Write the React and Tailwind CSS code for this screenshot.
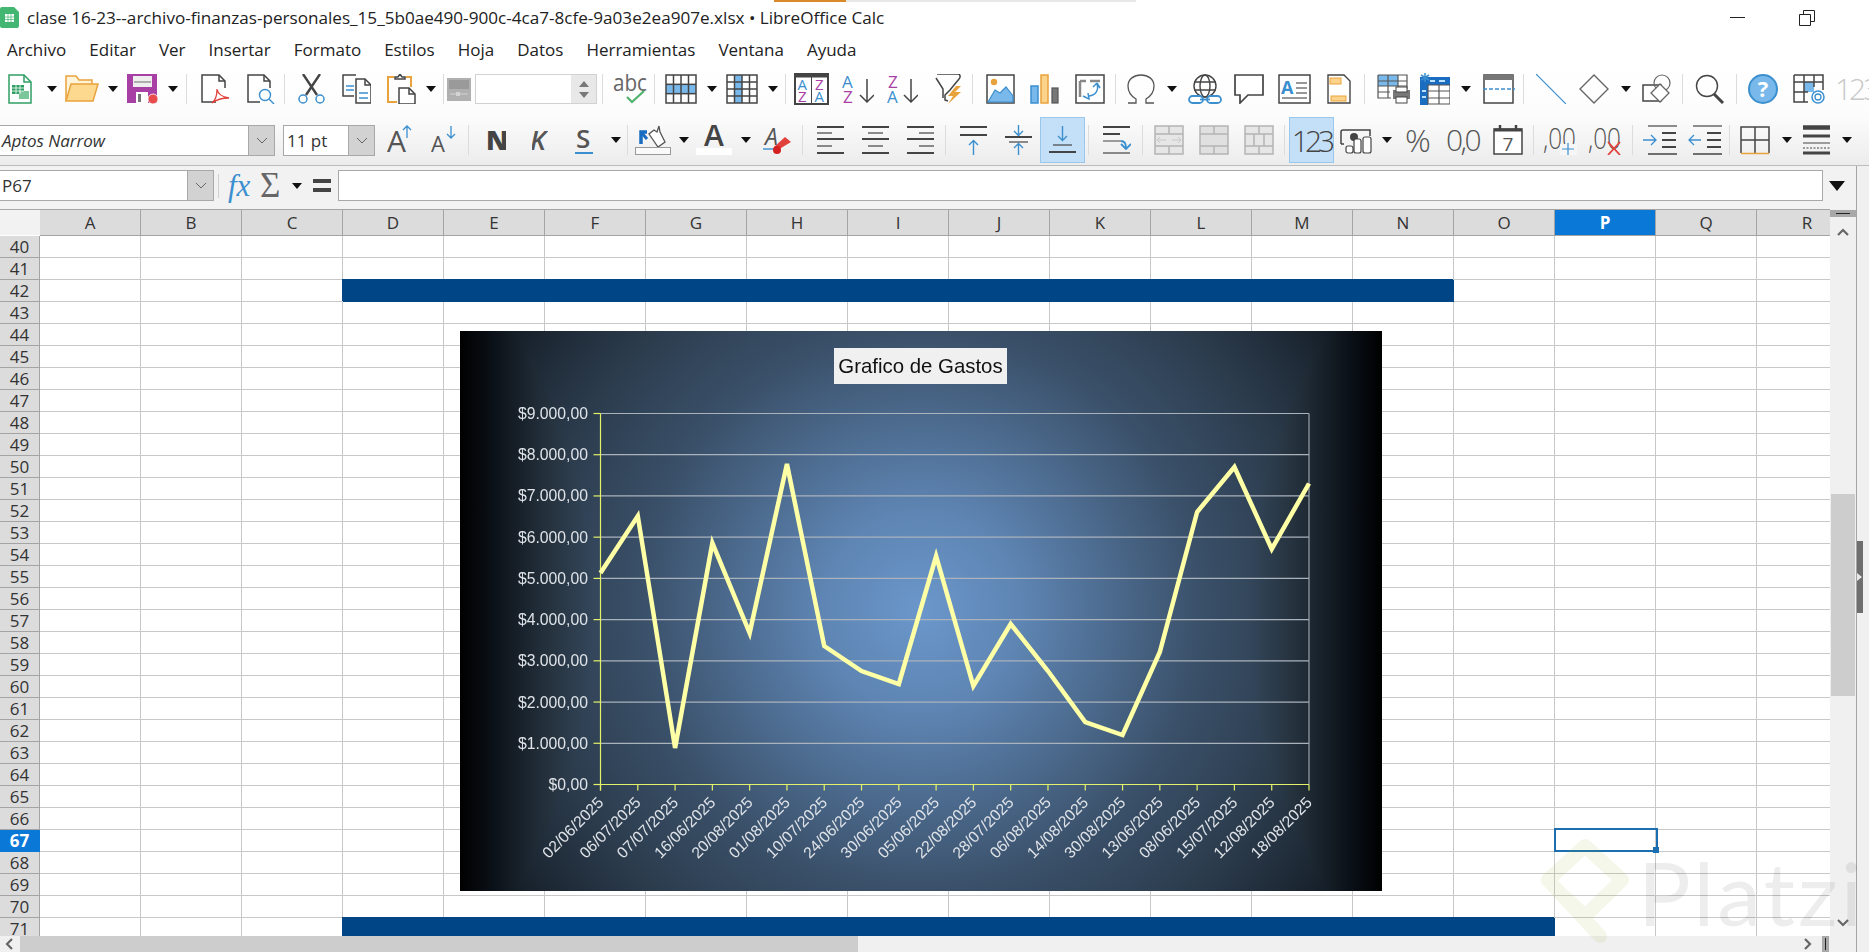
import React from 'react';

const BLUE = '#3b8fcf';
const LIGHT = '#79b8ea';
const DARK = '#444444';
const PURPLE = '#a83fa4';
const ORANGE = '#e9a33c';
const RED = '#e2403a';

const COLS = 'ABCDEFGHIJKLMNOPQR'.split('');
const ROWS = Array.from({ length: 32 }, (_, i) => 40 + i);
const MENU = ['Archivo', 'Editar', 'Ver', 'Insertar', 'Formato', 'Estilos', 'Hoja', 'Datos', 'Herramientas', 'Ventana', 'Ayuda'];

// chart data, in pixels inside the chart box
const LABELS = ['02/06/2025', '06/07/2025', '07/07/2025', '16/06/2025', '20/08/2025', '01/08/2025', '10/07/2025', '24/06/2025', '30/06/2025', '05/06/2025', '22/08/2025', '28/07/2025', '06/08/2025', '14/08/2025', '30/08/2025', '13/06/2025', '08/06/2025', '15/07/2025', '12/08/2025', '18/08/2025'];
const POINTS = [242, 185, 417, 212, 302, 133, 315, 340, 353, 225, 355, 293, 340, 391, 404, 321, 181, 136, 218, 152.5];
const Y_LABELS = ['$9.000,00', '$8.000,00', '$7.000,00', '$6.000,00', '$5.000,00', '$4.000,00', '$3.000,00', '$2.000,00', '$1.000,00', '$0,00'];
const PLOT = { left: 140.5, right: 849, top: 82.5, bottom: 453.5 };
const STEP_X = (PLOT.right - PLOT.left) / 19;
const STEP_Y = (PLOT.bottom - PLOT.top) / 9;

const Ico = ({ w, h = 30, className = '', children }) => (
    <svg width={w} height={h} viewBox={`0 0 ${w} ${h}`} fill="none" className={`shrink-0 ${className}`}>
        {children}
    </svg>
);

const Arrow = ({ className }) => (
    <Ico w={10} h={6} className={className}>
        <path d="M0 0h10L5 6z" fill="#111" />
    </Ico>
);

const Sep = ({ className }) => <div className={`w-px h-[30px] bg-[#dcdcdc] shrink-0 ${className}`} />;

const Chevron = () => (
    <svg width="12" height="7" viewBox="0 0 12 7" fill="none">
        <path d="M1 1l5 5 5-5" stroke="#666" strokeWidth="1" />
    </svg>
);

const Grid = ({ x, y, w, h, cols, rows, stroke = DARK, sw = 1.5 }) => (
    <g stroke={stroke} strokeWidth={sw}>
        <rect x={x} y={y} width={w} height={h} />
        {Array.from({ length: cols - 1 }, (_, i) => {
            const px = x + (w / cols) * (i + 1);
            return <path key={i} d={`M${px} ${y}V${y + h}`} />;
        })}
        {Array.from({ length: rows - 1 }, (_, i) => {
            const py = y + (h / rows) * (i + 1);
            return <path key={i} d={`M${x} ${py}H${x + w}`} />;
        })}
    </g>
);

const Lines = ({ rows, stroke = DARK }) => (
    <g stroke={stroke}>
        {rows.map(([x1, x2, y, sw = 2], i) => (
            <path key={i} d={`M${x1} ${y}H${x2}`} strokeWidth={sw} />
        ))}
    </g>
);

const TopToolbar = () => (
    <div className="flex items-center h-[42px] overflow-hidden">
        <Ico w={24} className="ml-2">
            <path d="M1 1h15l7 7v21H1z" stroke="#2f9e63" strokeWidth="1.5" fill="#fff" />
            <path d="M16 1v7h7" stroke="#2f9e63" strokeWidth="1.5" />
            <rect x="4" y="11" width="12" height="9" fill="#2f9e63" />
            <rect x="11" y="17" width="10" height="8" fill="#7cc79a" />
            <path d="M4 14h12M4 17h12M8 11v9M12 11v9" stroke="#fff" strokeWidth=".8" />
        </Ico>
        <Arrow className="ml-[15px]" />
        <Ico w={34} className="ml-2">
            <path d="M1 27V2h10l3 4h13v5" stroke={ORANGE} strokeWidth="1.5" fill="#fff3d8" />
            <path d="M1 27l5-17h27l-5 17z" stroke={ORANGE} strokeWidth="1.5" fill="#fdd88f" />
        </Ico>
        <Arrow className="ml-[9px]" />
        <Ico w={32} className="ml-[9px]">
            <path d="M1 1h28v27H1z" fill={PURPLE} stroke={PURPLE} strokeWidth="2" />
            <rect x="6" y="2" width="19" height="11" fill="#eee" />
            <path d="M7 8h17" stroke="#999" strokeWidth="1.5" />
            <rect x="9" y="18" width="12" height="11" fill="#fff" />
            <rect x="11" y="20" width="3" height="8" fill="#777" />
            <circle cx="26" cy="25" r="5" fill="#e84b4b" stroke="#fff" strokeWidth=".8" />
        </Ico>
        <Arrow className="ml-[9px]" />
        <Sep className="ml-2" />
        <Ico w={29} className="ml-[14px]">
            <path d="M24 14V7l-6-6H1v27h14" stroke={DARK} strokeWidth="1.5" fill="#fff" />
            <path d="M18 1v6h6" stroke={DARK} strokeWidth="1.5" />
            <path d="M11 29c4-3 5-8 5-14 1 6 5 8 12 9-6 0-12 1-17 5z" stroke={RED} strokeWidth="1.3" />
        </Ico>
        <Ico w={28} className="ml-[17px]">
            <path d="M23 14V7l-6-6H1v27h12" stroke={DARK} strokeWidth="1.5" fill="#fff" />
            <path d="M17 1v6h6" stroke={DARK} strokeWidth="1.5" />
            <circle cx="18" cy="21" r="5.5" stroke={BLUE} strokeWidth="1.4" fill="#fff" />
            <path d="M22 25l5 5" stroke={BLUE} strokeWidth="1.4" />
        </Ico>
        <Sep className="ml-[9px]" />
        <Ico w={27} className="ml-[13px]">
            <path d="M5 0l14 21M22 0L8 21" stroke={DARK} strokeWidth="2.4" />
            <circle cx="5" cy="25" r="4" stroke={BLUE} strokeWidth="1.5" fill="#fff" />
            <circle cx="22" cy="25" r="4" stroke={BLUE} strokeWidth="1.5" fill="#fff" />
        </Ico>
        <Ico w={29} className="ml-[17px]">
            <path d="M14 1H1v21h11" stroke={DARK} strokeWidth="1.5" />
            <path d="M4 12h8M4 16h8" stroke={BLUE} strokeWidth="1.5" />
            <path d="M14 5h9l6 6v18H14z" stroke={DARK} strokeWidth="1.5" fill="#fff" />
            <path d="M23 5v6h6" stroke={DARK} strokeWidth="1.5" />
            <path d="M17 19h9M17 24h9" stroke={BLUE} strokeWidth="1.7" />
        </Ico>
        <Ico w={29} className="ml-4">
            <path d="M7 3H1v25h9M19 3h5v10" stroke={ORANGE} strokeWidth="2" />
            <path d="M8 5V3h3l2-3 2 3h3v2z" stroke={DARK} strokeWidth="1.5" fill="#fff" />
            <path d="M12 14h10l6 6v10H12z" stroke={DARK} strokeWidth="1.5" fill="#fff" />
            <path d="M22 14v6h6" stroke={DARK} strokeWidth="1.5" />
        </Ico>
        <Arrow className="ml-[10px]" />
        <Sep className="ml-[7px]" />
        <Ico w={24} h={23} className="ml-[3px]">
            <rect width="24" height="23" fill="#b0b0b0" />
            <rect x="2" y="2" width="20" height="9" fill="#9a9a9a" />
            <path d="M3 16h18" stroke="#d4d4d4" strokeWidth="1" />
            <rect x="9" y="14" width="4" height="4" fill="#d4d4d4" />
        </Ico>
        <div className="flex ml-1 w-[122px] h-[30px] bg-white border border-[#d2d2d2] shrink-0">
            <div className="flex-1" />
            <div className="w-[25px] flex flex-col items-center justify-around bg-[#e8e8e8] py-[3px]">
                <svg width="10" height="6" viewBox="0 0 12 7"><path d="M0 7L6 0l6 7z" fill="#777" /></svg>
                <svg width="10" height="6" viewBox="0 0 12 7"><path d="M0 0l6 7 6-7z" fill="#777" /></svg>
            </div>
        </div>
        <Sep className="ml-[5px]" />
        <Ico w={34} className="ml-[10px]">
            <text x="0" y="17" fontSize="23" fill="#666" textLength="34" lengthAdjust="spacingAndGlyphs">abc</text>
            <path d="M14 23l5 5 12-11" stroke="#4fb36f" strokeWidth="2.2" />
        </Ico>
        <Sep className="ml-[7px]" />
        <Ico w={32} className="ml-[10px]">
            <rect x="1" y="10" width="30" height="9" fill={LIGHT} />
            <Grid x={1} y={1} w={30} h={28} cols={4} rows={3} />
        </Ico>
        <Arrow className="ml-[10px]" />
        <Ico w={32} className="ml-[9px]">
            <rect x="8.500" y="1" width="7.500" height="28" fill={LIGHT} />
            <Grid x={1} y={1} w={30} h={28} cols={4} rows={4} />
        </Ico>
        <Arrow className="ml-[10px]" />
        <Sep className="ml-[7px]" />
        <Ico w={35} h={32} className="ml-2">
            <rect x="1" y="1" width="33" height="30" stroke={DARK} strokeWidth="2" fill="#fff" />
            <path d="M1 3h33" stroke={DARK} strokeWidth="3" />
            <path d="M17.500 4v26" stroke={DARK} strokeWidth="1" />
            <text x="3.500" y="17" fontSize="15" fill={BLUE}>A</text>
            <text x="4" y="29" fontSize="15" fill={PURPLE}>Z</text>
            <text x="21" y="17" fontSize="15" fill={PURPLE}>Z</text>
            <text x="20.500" y="29" fontSize="15" fill={BLUE}>A</text>
        </Ico>
        <Ico w={32} className="ml-[13px]">
            <text x="0" y="14" fontSize="17" fill={BLUE}>A</text>
            <text x="1" y="29" fontSize="17" fill={PURPLE}>Z</text>
            <path d="M25 5v23M18 21l7 7 7-7" stroke={DARK} strokeWidth="1.5" />
        </Ico>
        <Ico w={31} className="ml-[13px]">
            <text x="1" y="14" fontSize="17" fill={PURPLE}>Z</text>
            <text x="0" y="29" fontSize="17" fill={BLUE}>A</text>
            <path d="M24 5v23M17 21l7 7 7-7" stroke={DARK} strokeWidth="1.5" />
        </Ico>
        <Ico w={30} className="ml-4">
            <path d="M3 0h21c2 0 3 3 1 5L16 16l-5 5v5l3 1M2 4l7 11v9" stroke={DARK} strokeWidth="1.5" />
            <path d="M22 12l-8 10h5l-5 8 13-12h-6l6-6z" fill={ORANGE} />
        </Ico>
        <Sep className="ml-2" />
        <Ico w={29} className="ml-[13px]">
            <rect x="1" y="1" width="27" height="28" stroke={DARK} strokeWidth="1.5" fill="#fff" />
            <circle cx="8" cy="8" r="3.200" fill={ORANGE} />
            <path d="M2 28l7-12 5 3 6-6 7 9v6z" fill={LIGHT} stroke={BLUE} strokeWidth="1.2" />
        </Ico>
        <Ico w={29} className="ml-[15px]">
            <rect x="1" y="12" width="7" height="17" fill={LIGHT} stroke={BLUE} strokeWidth="1.5" />
            <rect x="11" y="1" width="7" height="28" fill="#fbd38a" stroke={ORANGE} strokeWidth="1.5" />
            <rect x="22" y="14" width="6" height="15" fill="#777" stroke="#555" strokeWidth="1.2" />
        </Ico>
        <Ico w={30} className="ml-4">
            <rect x="1" y="1" width="28" height="28" stroke={DARK} strokeWidth="1.5" fill="#fff" />
            <path d="M5 7h6M15 7h10M5 7v16" stroke="#888" strokeWidth="2.500" />
            <path d="M22 10c2 6-1 11-8 12M8 22l6 3-1-6M22 9l-4 4M22 9l3 5" stroke={BLUE} strokeWidth="1.5" />
        </Ico>
        <Sep className="ml-[10px]" />
        <Ico w={30} className="ml-[10px]">
            <path d="M2 29h8v-4C5 22 2 18 2 12 2 5 8 1 15 1s13 4 13 11c0 6-3 10-8 13v4h8" stroke="#555" strokeWidth="1.3" />
        </Ico>
        <Arrow className="ml-[11px]" />
        <Ico w={34} className="ml-[11px]">
            <circle cx="17" cy="12" r="11" stroke={DARK} strokeWidth="1.4" />
            <ellipse cx="17" cy="12" rx="5" ry="11" stroke={DARK} strokeWidth="1.4" />
            <path d="M6 8h22M6 16h22" stroke={DARK} strokeWidth="1.4" />
            <rect x="1" y="22" width="14" height="7" rx="3.500" stroke={BLUE} strokeWidth="1.8" fill="#fff" />
            <rect x="19" y="22" width="14" height="7" rx="3.500" stroke={BLUE} strokeWidth="1.8" fill="#fff" />
            <path d="M12 25.500h10" stroke={BLUE} strokeWidth="1.8" />
        </Ico>
        <Ico w={30} className="ml-3">
            <path d="M1 1h28v20H14l-8 8v-8H1z" stroke={DARK} strokeWidth="1.7" fill="#fff" />
        </Ico>
        <Ico w={33} className="ml-[14px]">
            <rect x="1" y="1" width="31" height="28" stroke={DARK} strokeWidth="1.5" fill="#fff" />
            <text x="3" y="20" fontSize="18" fontWeight="700" fill={BLUE}>A</text>
            <path d="M18 9h11M18 14h11M18 19h11M4 24h25" stroke="#777" strokeWidth="1.5" />
        </Ico>
        <Ico w={24} className="ml-4">
            <path d="M1 1h16l6 6v22H1z" stroke={DARK} strokeWidth="1.4" fill="#fff" />
            <rect x="3" y="4" width="11" height="6" fill="#fbd38a" stroke={ORANGE} strokeWidth="1" />
            <rect x="4" y="22" width="15" height="5" fill="#fbd38a" stroke={ORANGE} strokeWidth="1" />
        </Ico>
        <Sep className="ml-[13px]" />
        <Ico w={34} className="ml-3">
            <rect x="1" y="1" width="20" height="11" fill={LIGHT} />
            <path d="M1 1h29v14M1 1v23h13M1 7h29M1 12h29M1 18h12M11 1v23M21 1v12" stroke="#555" strokeWidth="1.2" />
            <rect x="16" y="16" width="17" height="9" fill="#777" />
            <rect x="19" y="13" width="11" height="5" fill="#fff" stroke={DARK} />
            <rect x="19" y="23" width="11" height="6" fill="#fff" stroke={DARK} />
        </Ico>
        <Ico w={30} h={32} className="ml-[9px]">
            <rect x="0" y="4" width="30" height="28" fill="#fff" />
            <rect x="0" y="4" width="8" height="28" fill="#1a6dc0" />
            <rect x="0" y="4" width="30" height="8" fill="#1a6dc0" />
            <path d="M8 12h22v19H8zM8 18h22M8 25h22M19 12v19" stroke="#555" strokeWidth="1.2" />
            <path d="M2 18h4M2 24h4M10 8h5M19 8h6" stroke="#bfe0fa" strokeWidth="2" />
            <path d="M5 0v9M1 2l8 5M9 2L1 7" stroke={BLUE} strokeWidth="1.5" />
        </Ico>
        <Arrow className="ml-[11px]" />
        <Ico w={32} className="ml-3">
            <rect x="1" y="1" width="29" height="28" stroke={DARK} strokeWidth="1.5" fill="#fff" />
            <rect x="1" y="1" width="29" height="5" fill="#777" />
            <path d="M0 15h32" stroke={BLUE} strokeWidth="1.7" strokeDasharray="4 2" />
        </Ico>
        <Sep className="ml-2" />
        <Ico w={30} className="ml-3">
            <path d="M0 0l30 30" stroke={BLUE} strokeWidth="1.2" />
        </Ico>
        <Ico w={30} className="ml-[13px]">
            <path d="M15 1l14 14-14 14L1 15z" stroke="#666" strokeWidth="1.4" />
        </Ico>
        <Arrow className="ml-3" />
        <Ico w={30} className="ml-[11px]">
            <rect x="1" y="11" width="18" height="16" stroke={DARK} strokeWidth="1.5" />
            <circle cx="20" cy="9" r="8" stroke="#666" strokeWidth="1.2" />
            <path d="M18 10l9 9-9 9-9-9z" stroke="#666" strokeWidth="1.3" fill="#fff" />
        </Ico>
        <Sep className="ml-[10px]" />
        <Ico w={30} className="ml-3">
            <circle cx="12" cy="12" r="10.500" stroke="#444" strokeWidth="1.4" />
            <path d="M19 20l9 9" stroke="#444" strokeWidth="3" />
        </Ico>
        <Sep className="ml-[11px]" />
        <Ico w={30} className="ml-[11px]">
            <circle cx="15" cy="15" r="14" fill={LIGHT} stroke={BLUE} strokeWidth="2" />
            <text x="15" y="23" fontSize="22" fontWeight="700" fill="#fff" textAnchor="middle">?</text>
        </Ico>
        <Ico w={32} className="ml-[15px]">
            <rect x="11" y="8" width="10" height="10" fill={LIGHT} />
            <path d="M1 1h29v15M1 1v27h14M1 8h29M1 18h14M11 1v27M21 1v12" stroke="#444" strokeWidth="1.5" />
            <circle cx="25" cy="23" r="6" stroke={BLUE} strokeWidth="1.5" fill="#fff" />
            <circle cx="25" cy="23" r="3" stroke={BLUE} strokeWidth="1.3" />
        </Ico>
        <span className="ml-[10px] text-[30px] leading-none font-light tracking-[-3px] text-[#c8c8c8] shrink-0">123</span>
    </div>
);

const FormatToolbar = () => (
    <div className="flex items-center h-[55px] pt-[5px] overflow-hidden">
        <div className="flex w-[275px] h-[31px] bg-white border border-l-0 border-[#a8a8a8] shrink-0">
            <span className="flex-1 pl-[2px] text-[17px] leading-[29px] italic text-[#333]">Aptos Narrow</span>
            <div className="w-[26px] flex items-center justify-center bg-[#d2d2d2] border-l border-[#a8a8a8]"><Chevron /></div>
        </div>
        <div className="flex ml-2 w-[92px] h-[31px] bg-white border border-[#a8a8a8] shrink-0">
            <span className="flex-1 pl-[3px] text-[17px] leading-[29px] text-[#333]">11 pt</span>
            <div className="w-[26px] flex items-center justify-center bg-[#d2d2d2] border-l border-[#a8a8a8]"><Chevron /></div>
        </div>
        <Ico w={25} className="ml-3">
            <text x="0" y="27" fontSize="30" fill="#555">A</text>
            <path d="M20 13V1M16 5l4-4 4 4" stroke={BLUE} strokeWidth="1.3" />
        </Ico>
        <Ico w={25} className="ml-[19px]">
            <text x="0" y="27" fontSize="22" fill="#555">A</text>
            <path d="M20 1v12M16 9l4 4 4-4" stroke={BLUE} strokeWidth="1.3" />
        </Ico>
        <Sep className="ml-3" />
        <Ico w={19} className="ml-[18px]">
            <text x="-1" y="25" fontSize="27" fontWeight="800" fill="#444">N</text>
        </Ico>
        <Ico w={16} className="ml-[26px]">
            <text x="-2" y="25" fontSize="27" fontStyle="italic" fontWeight="600" fill="#555">K</text>
        </Ico>
        <Ico w={18} className="ml-[27px]">
            <text x="1" y="23" fontSize="26" fontWeight="600" fill="#555">S</text>
            <path d="M0 28h18" stroke={BLUE} strokeWidth="2" />
        </Ico>
        <Arrow className="ml-[18px]" />
        <Sep className="ml-[6px]" />
        <Ico w={36} className="ml-[7px]">
            <path d="M6 19V7h6" stroke="#1a6dc0" strokeWidth="3.500" />
            <path d="M6 7l6 7" stroke="#1a6dc0" strokeWidth="3" />
            <path d="M14 9l9 13 7-5-5-10-1-6-2 6-3-2z" stroke="#555" strokeWidth="1.3" fill="#fff" />
            <rect x=".5" y="22.500" width="35" height="7" stroke="#999" fill="#fafafa" />
        </Ico>
        <Arrow className="ml-2" />
        <Ico w={36} className="ml-[7px]">
            <rect y="23" width="36" height="7" fill="#fff" />
            <text x="18" y="21" fontSize="30" fontWeight="600" textAnchor="middle" fill="#444">A</text>
        </Ico>
        <Arrow className="ml-[9px]" />
        <Ico w={28} className="ml-3">
            <text x="2" y="20" fontSize="23" fontStyle="italic" fill="#555">A</text>
            <path d="M0 24h12" stroke={BLUE} strokeWidth="1.4" />
            <path d="M13 26l-2-4 11-10 6 5z" fill={RED} />
            <circle cx="14" cy="25" r="4" fill="#d42020" />
        </Ico>
        <Sep className="ml-[11px]" />
        <Ico w={27} className="ml-[14px]">
            <Lines rows={[[0, 27, 2], [0, 15, 8, 1.2], [0, 27, 14], [0, 15, 21, 1.2], [0, 27, 28]]} />
        </Ico>
        <Ico w={27} className="ml-[18px]">
            <Lines rows={[[0, 27, 2], [6, 21, 8, 1.2], [0, 27, 14], [6, 21, 21, 1.2], [0, 27, 28]]} />
        </Ico>
        <Ico w={27} className="ml-[18px]">
            <Lines rows={[[0, 27, 2], [12, 27, 8, 1.2], [0, 27, 14], [12, 27, 21, 1.2], [0, 27, 28]]} />
        </Ico>
        <Sep className="ml-[11px]" />
        <Ico w={27} className="ml-[14px]">
            <Lines rows={[[0, 27, 2], [0, 27, 10]]} />
            <path d="M13.500 30V16M9 20l4.500-4.500L18 20" stroke={BLUE} strokeWidth="1.4" />
        </Ico>
        <Ico w={27} className="ml-[18px]">
            <path d="M13.500 0v10M9 6l4.500 4.500L18 6M13.500 30V19M9 23l4.500-4.500L18 23" stroke={BLUE} strokeWidth="1.4" />
            <Lines rows={[[0, 27, 12], [4, 23, 17, 1.2]]} />
        </Ico>
        <div className="ml-2 flex items-center justify-center w-[45px] h-[46px] bg-[#c4e0f8] border border-[#9ac8ec] shrink-0">
            <Ico w={27}>
                <path d="M13.500 1v14M9 11l4.500 4.500L18 11" stroke={BLUE} strokeWidth="1.4" />
                <Lines rows={[[4, 23, 20, 1.2], [0, 27, 27]]} />
            </Ico>
        </div>
        <Sep className="ml-[3px]" />
        <Ico w={28} className="ml-[14px]">
            <Lines rows={[[0, 27, 2], [0, 17, 9], [0, 27, 28, 1.2]]} />
            <path d="M0 16h18" stroke={DARK} strokeWidth="1" />
            <path d="M18 16c4 0 5 3 5 7M18 19l5 5 5-5" stroke={BLUE} strokeWidth="1.8" />
        </Ico>
        <Sep className="ml-[11px]" />
        <Ico w={30} className="ml-[11px]">
            <rect x="1" y="1" width="28" height="28" fill="#e6e6e6" stroke="#b4b4b4" strokeWidth="1.5" />
            <path d="M1 9h28M1 21h28M15 1v8M15 21v8" stroke="#b4b4b4" strokeWidth="1.5" />
            <path d="M3 15h9M27 15h-9M6 12l-3 3 3 3M24 12l3 3-3 3" stroke="#c8c8c8" strokeWidth="1" />
        </Ico>
        <Ico w={30} className="ml-[15px]">
            <rect x="1" y="1" width="28" height="28" fill="#e0e0e0" stroke="#b4b4b4" strokeWidth="1.5" />
            <path d="M1 9h28M1 21h28M15 1v8M15 21v8" stroke="#b4b4b4" strokeWidth="1.5" />
        </Ico>
        <Ico w={30} className="ml-[15px]">
            <rect x="1" y="1" width="28" height="28" fill="#e6e6e6" stroke="#b4b4b4" strokeWidth="1.5" />
            <path d="M1 9h28M1 21h28M15 1v8M15 21v8M10 9v12M20 9v12" stroke="#b4b4b4" strokeWidth="1.5" />
        </Ico>
        <Sep className="ml-[10px]" />
        <div className="ml-1 flex items-center justify-center w-[45px] h-[46px] bg-[#c4e0f8] border border-[#9ac8ec] shrink-0 text-[30px] font-light tracking-[-4px] text-[#444]">123</div>
        <Ico w={33} className="ml-[5px]">
            <path d="M2 19V7q0-2 2-2h27v6M2 19h3" stroke={DARK} strokeWidth="1.5" />
            <circle cx="15" cy="12" r="4" fill={DARK} />
            <g stroke={DARK} strokeWidth="1.2" fill="#fff">
                <rect x="7" y="21" width="7" height="7" rx="2" />
                <rect x="15" y="14" width="7" height="14" rx="2" />
                <rect x="24" y="12" width="8" height="16" rx="2" />
            </g>
        </Ico>
        <Arrow className="ml-[10px]" />
        <span className="ml-[13px] w-[25px] text-[32px] leading-none font-light text-[#555] shrink-0">%</span>
        <span className="ml-4 w-[34px] text-[30px] leading-none font-light tracking-[-2.500px] text-[#555] shrink-0">0,0</span>
        <Ico w={30} className="ml-[13px]">
            <rect x="1" y="4" width="28" height="25" stroke={DARK} strokeWidth="1.5" fill="#fff" />
            <path d="M1 5h28" stroke={DARK} strokeWidth="3" />
            <path d="M7 0v6M23 0v6" stroke={DARK} strokeWidth="2.500" />
            <text x="15" y="26" fontSize="19" fill="#555" textAnchor="middle">7</text>
        </Ico>
        <Sep className="ml-[10px]" />
        <Ico w={34} className="ml-[9px]">
            <text x="0" y="24" fontSize="30" fontWeight="300" fill="#555" textLength="33" lengthAdjust="spacingAndGlyphs">,00</text>
            <rect x="17" y="19" width="17" height="11" fill="#f6f6f6" />
            <path d="M25 18v12M19 24h12" stroke={BLUE} strokeWidth="1.2" />
        </Ico>
        <Ico w={34} className="ml-[11px]">
            <text x="0" y="24" fontSize="30" fontWeight="300" fill="#555" textLength="33" lengthAdjust="spacingAndGlyphs">,00</text>
            <path d="M20 17l12 13M32 17L20 30" stroke={RED} strokeWidth="1.8" />
        </Ico>
        <Sep className="ml-[10px]" />
        <Ico w={34} className="ml-[10px]">
            <Lines rows={[[5, 34, 1, 1.2], [19, 33, 8], [19, 33, 15], [19, 33, 22], [5, 34, 29, 1.5]]} />
            <path d="M0 15h12M8 10l5 5-5 5" stroke={BLUE} strokeWidth="1.3" />
        </Ico>
        <Ico w={34} className="ml-[11px]">
            <Lines rows={[[5, 34, 1, 1.2], [19, 33, 8], [19, 33, 15], [19, 33, 22], [5, 34, 29, 1.5]]} />
            <path d="M13 15H1M6 10l-5 5 5 5" stroke={BLUE} strokeWidth="1.3" />
        </Ico>
        <Sep className="ml-[7px]" />
        <Ico w={30} className="ml-[10px]">
            <path d="M1 28V2h28v26M15 2v26M1 15h28" stroke={DARK} strokeWidth="1.5" />
            <path d="M1 28.500h28" stroke={ORANGE} strokeWidth="1.5" />
        </Ico>
        <Arrow className="ml-3" />
        <Ico w={27} className="ml-[11px]">
            <path d="M0 2.500h27" stroke={DARK} strokeWidth="4.500" />
            <path d="M0 11h27" stroke={DARK} strokeWidth="3" />
            <path d="M0 18h27" stroke={DARK} strokeWidth="1" />
            <path d="M0 23h27" stroke={DARK} strokeWidth="1" strokeDasharray="2 1.500" />
            <path d="M0 28h27" stroke={DARK} strokeWidth="3" />
        </Ico>
        <Arrow className="ml-3" />
    </div>
);

const FormulaBar = () => (
    <div className="flex items-center h-[43px] pb-[8px] pt-[4px] bg-[#f2f2f2]">
        <div className="flex w-[214px] h-[31px] bg-white border border-l-0 border-[#a8a8a8] shrink-0">
            <span className="flex-1 pl-[2px] text-[17px] leading-[29px] text-[#333]">P67</span>
            <div className="w-[26px] flex items-center justify-center bg-[#d2d2d2] border-l border-[#a8a8a8]"><Chevron /></div>
        </div>
        <div className="ml-[4px] w-px h-[24px] bg-[#d0d0d0] shrink-0" />
        <span className="ml-[9px] w-[25px] text-[31px] leading-none italic text-[#3b8fcf] font-['Liberation_Serif',serif] shrink-0">fx</span>
        <span className="ml-[7px] w-[20px] text-[35px] leading-none text-[#666] font-['Liberation_Serif',serif] shrink-0">Σ</span>
        <Arrow className="ml-[12px]" />
        <div className="ml-[11px] w-[18px] flex flex-col gap-[5px] shrink-0">
            <div className="h-[4px] bg-[#444]" />
            <div className="h-[4px] bg-[#444]" />
        </div>
        <div className="ml-[7px] w-[1485px] h-[31px] bg-white border border-[#a8a8a8] shrink-0" />
        <svg width="16" height="10" viewBox="0 0 16 10" className="ml-[6px] shrink-0"><path d="M0 0h16L8 10z" fill="#111" /></svg>
    </div>
);

const Chart = () => (
    <svg width="922" height="560" viewBox="0 0 922 560" className="absolute left-[460px] top-[122px] z-10 font-['Liberation_Sans',sans-serif]">
        <defs>
            {/* spot in the middle, the side gradient takes it to black at the left and right edges */}
            <radialGradient id="chartSpot" gradientUnits="userSpaceOnUse" cx="461" cy="280" r="600">
                <stop offset="0" stopColor="#6b97cb" />
                <stop offset="0.167" stopColor="#5e85b3" />
                <stop offset="0.467" stopColor="#3a5069" />
                <stop offset="0.65" stopColor="#2b3b4c" />
                <stop offset="0.775" stopColor="#1c2733" />
                <stop offset="0.9" stopColor="#0a0f14" />
                <stop offset="1" stopColor="#000" />
            </radialGradient>
            <linearGradient id="chartSides" x1="0" y1="0" x2="1" y2="0">
                <stop offset="0" stopColor="#000" />
                <stop offset="0.036" stopColor="#0b1118" />
                <stop offset="0.098" stopColor="#26333f" />
                <stop offset="0.175" stopColor="#3c536d" />
                <stop offset="0.35" stopColor="#6b97cb" />
                <stop offset="0.65" stopColor="#6b97cb" />
                <stop offset="0.825" stopColor="#3c536d" />
                <stop offset="0.902" stopColor="#26333f" />
                <stop offset="0.964" stopColor="#0b1118" />
                <stop offset="1" stopColor="#000" />
            </linearGradient>
        </defs>
        <rect width="922" height="560" fill="url(#chartSpot)" />
        <rect width="922" height="560" fill="url(#chartSides)" className="mix-blend-darken" />
        <rect x="374" y="17" width="173" height="36" fill="#f0f0f0" />
        <text x="460.500" y="42" textAnchor="middle" fontSize="20.400" fill="#111">Grafico de Gastos</text>
        {Y_LABELS.map((label, i) => {
            const y = PLOT.top + STEP_Y * i;
            return (
                <g key={label}>
                    {i < 9 && <path d={`M${PLOT.left} ${y}H${PLOT.right}`} stroke="#aab2bc" strokeWidth="1.2" />}
                    <path d={`M${PLOT.left - 7} ${y}H${PLOT.left}`} stroke="#e4f26a" strokeWidth="1.2" />
                    <text x="128" y={y + 5.5} textAnchor="end" fontSize="15.750" fill="#dfe3e8">{label}</text>
                </g>
            );
        })}
        <path d={`M${PLOT.right} ${PLOT.top}V${PLOT.bottom}`} stroke="#9aa2ab" strokeWidth="1.2" />
        <path d={`M${PLOT.left} ${PLOT.top}V${PLOT.bottom + 6}`} stroke="#e4f26a" strokeWidth="1.2" />
        <path d={`M${PLOT.left} ${PLOT.bottom}H${PLOT.right}`} stroke="#e4f26a" strokeWidth="1.2" />
        {LABELS.map((label, i) => {
            const x = PLOT.left + STEP_X * i;
            return (
                <g key={i}>
                    <path d={`M${x} ${PLOT.bottom}v6`} stroke="#e4f26a" strokeWidth="1.2" />
                    <text transform={`translate(${x + 4} ${PLOT.bottom + 19}) rotate(-45)`} textAnchor="end" fontSize="15.750" fill="#dfe3e8">{label}</text>
                </g>
            );
        })}
        <polyline
            points={POINTS.map((y, i) => `${PLOT.left + STEP_X * i},${y}`).join(' ')}
            fill="none"
            stroke="#ffffa6"
            strokeWidth="4.500"
        />
    </svg>
);

const Sheet = () => (
    <div className="relative flex-1 overflow-hidden">
        <div className="flex h-[27px]">
            <div className="w-[40px] h-[26px] bg-[#f2f2f2] border-t border-[#a8a8a8] shrink-0" />
            {COLS.map((c) => (
                <div
                    key={c}
                    className={`w-[101px] h-[27px] shrink-0 flex items-center justify-center border-t border-b border-r border-[#a4a4a4] text-[17px] ${c === 'P' ? 'bg-[#0a78d6] text-white font-bold' : 'bg-[#dcdcdc] text-[#333]'}`}
                >
                    {c}
                </div>
            ))}
        </div>
        {ROWS.map((r) => (
            <div key={r} className="flex h-[22px]">
                <div className={`w-[40px] shrink-0 flex items-center justify-center border-r border-b text-[17px] leading-none ${r === 67 ? 'bg-[#0a78d6] text-white font-bold border-[#0a78d6]' : 'bg-[#dcdcdc] text-[#333] border-[#a4a4a4]'}`}>
                    {r}
                </div>
                {COLS.map((c, i) => {
                    const band = (r === 42 && i >= 3 && i <= 13) || (r === 71 && i >= 3 && i <= 14);
                    return (
                        <div
                            key={c}
                            className={`relative w-[101px] shrink-0 ${band ? 'bg-[#004586] shadow-[-1px_-1px_0_#004586]' : 'bg-white border-r border-b border-[#c8c8c8]'}`}
                        >
                            {r === 67 && c === 'P' && (
                                <div className="absolute -left-px -top-[2px] w-[104px] h-[24px] border-2 border-[#1b6fb0] z-10">
                                    <div className="absolute -right-[3px] -bottom-[3px] w-[6px] h-[6px] bg-[#1b6fb0]" />
                                </div>
                            )}
                        </div>
                    );
                })}
            </div>
        ))}
        <Chart />
    </div>
);

const VerticalScroll = () => (
    <div className="w-[26px] flex flex-col items-center bg-[#f0f0f0] shrink-0">
        <div className="w-full h-[7px] bg-[#a8a8a8] flex items-center justify-center mt-px">
            <div className="w-[14px] h-px bg-[#222]" />
        </div>
        <svg width="12" height="8" viewBox="0 0 12 8" className="mt-[11px]"><path d="M1 7l5-5 5 5" stroke="#666" strokeWidth="2.200" fill="none" /></svg>
        <div className="w-[24px] h-[202px] bg-[#cdcdcd] mt-[258px] mr-px" />
        <svg width="12" height="8" viewBox="0 0 12 8" className="mt-[223px]"><path d="M1 1l5 5 5-5" stroke="#666" strokeWidth="2.200" fill="none" /></svg>
    </div>
);

const HorizontalScroll = () => (
    <div className="flex items-center h-[16px] bg-[#f0f0f0]">
        <svg width="8" height="12" viewBox="0 0 8 12" className="ml-[5px] shrink-0"><path d="M7 1L2 6l5 5" stroke="#666" strokeWidth="2.200" fill="none" /></svg>
        <div className="ml-[7px] w-[838px] h-full bg-[#cdcdcd] shrink-0" />
        <svg width="8" height="12" viewBox="0 0 8 12" className="ml-[946px] shrink-0"><path d="M1 1l5 5-5 5" stroke="#666" strokeWidth="2.200" fill="none" /></svg>
        <div className="ml-[10px] w-[7px] h-full bg-[#a8a8a8] flex items-center justify-center shrink-0">
            <div className="w-px h-[12px] bg-[#222]" />
        </div>
    </div>
);

const App = () => {
    return (
        <div className="relative w-[1869px] h-[952px] overflow-hidden flex flex-col bg-white font-['Open_Sans',sans-serif]">
            {/* Title bar */}
            <div className="flex h-[2px] shrink-0">
                <div className="ml-[774px] w-[72px] bg-[#d98a2b]" />
                <div className="w-[290px] bg-[#e8e8e8]" />
            </div>
            <div className="flex items-center h-[31px] shrink-0">
                <Ico w={19} h={21}>
                    <path d="M2 0h12l5 5v14q0 2-2 2H2q-2 0-2-2V2q0-2 2-2z" fill="#43b772" />
                    <rect x="5" y="7" width="9" height="8" fill="#fff" />
                    <path d="M5 10h9M5 12.500h9M8 7v8M11 7v8" stroke="#43b772" strokeWidth=".7" />
                </Ico>
                <span className="ml-[8px] text-[17.120px] text-[#222]">clase 16-23--archivo-finanzas-personales_15_5b0ae490-900c-4ca7-8cfe-9a03e2ea907e.xlsx • LibreOffice Calc</span>
                <div className="ml-auto w-[15px] h-px bg-[#222]" />
                <svg width="16" height="16" viewBox="0 0 16 16" fill="none" className="ml-[54px] mr-[54px]">
                    <path d="M.5 4.500h11v11H.5zM4.500 4.500v-4h11v11h-4" stroke="#222" />
                </svg>
            </div>

            {/* Menu bar */}
            <div className="flex items-center gap-[23px] pl-[7px] pb-[2px] h-[35px] text-[17px] text-[#222] shrink-0">
                {MENU.map((label) => (
                    <span key={label}>{label}</span>
                ))}
            </div>

            {/* Toolbars */}
            <div className="shrink-0 bg-gradient-to-b from-white via-[#fcfcfc] to-[#ececec] border-b border-[#bcbcbc]">
                <TopToolbar />
                <FormatToolbar />
            </div>

            <div className="flex flex-1 min-h-0">
                <div className="flex flex-col w-[1856px] shrink-0">
                    <FormulaBar />
                    <div className="flex flex-1 min-h-0">
                        <Sheet />
                        <VerticalScroll />
                    </div>
                    <HorizontalScroll />
                </div>
                <div className="flex-1 bg-[#f0f0f0] border-l border-[#a4a4a4]">
                    <div className="mt-[375px] w-[6px] h-[72px] bg-[#6e6e6e] flex items-center">
                        <svg width="5" height="8" viewBox="0 0 5 8"><path d="M0 0l5 4-5 4z" fill="#e8e8e8" /></svg>
                    </div>
                </div>
            </div>

            {/* Platzi watermark */}
            <div className="absolute left-[1540px] top-[838px] z-20 flex items-center pointer-events-none">
                <svg width="90" height="108" viewBox="0 0 90 108" fill="none">
                    <path d="M45 8L82 42 45 78 26 60 M45 8L8 42l52 56" stroke="#8fb02a" strokeOpacity=".1" strokeWidth="14" strokeLinejoin="round" strokeLinecap="round" />
                </svg>
                <span className="ml-[8px] text-[88px] leading-none tracking-[3px] text-black/[.07] font-['Lato',sans-serif]">Platzi</span>
            </div>
        </div>
    );
};

export default App;
